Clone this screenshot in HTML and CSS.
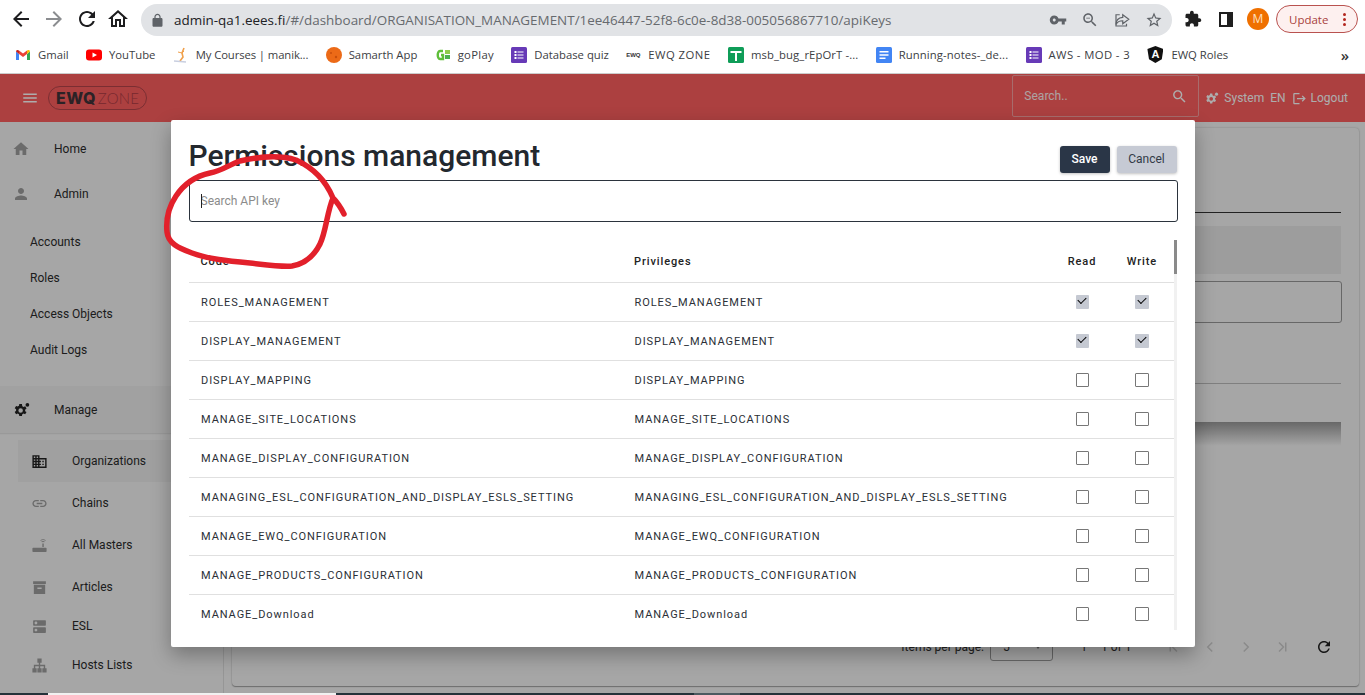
FILE: index.html
```html
<!DOCTYPE html>
<html lang="en">
<head>
  <meta charset="UTF-8" />
  <title>EWQ Zone</title>
  <link rel="stylesheet" href="styles.css">
</head>
<body>
  <div class="toolbar">
    <svg class="nav-icon" viewBox="0 0 24 24"><path d="M20 11H7.83l5.59-5.59L12 4l-8 8 8 8 1.41-1.41L7.83 13H20v-2z"/></svg>
    <svg class="nav-icon nav-off" viewBox="0 0 24 24"><path d="M4 11h12.17l-5.59-5.59L12 4l8 8-8 8-1.41-1.41L16.17 13H4v-2z"/></svg>
    <svg class="nav-icon" viewBox="0 0 24 24"><path d="M17.65 6.35C16.2 4.9 14.21 4 12 4c-4.42 0-7.99 3.58-7.99 8s3.57 8 7.99 8c3.73 0 6.84-2.55 7.73-6h-2.08c-.82 2.33-3.04 4-5.65 4-3.31 0-6-2.69-6-6s2.69-6 6-6c1.66 0 3.14.69 4.22 1.78L13 11h7V4l-2.35 2.35z"/></svg>
    <svg class="nav-icon nav-home" viewBox="0 0 24 24"><path d="M12 5.69l5 4.5V18h-2v-6H9v6H7v-7.81l5-4.5M12 3L2 12h3v8h6v-6h2v6h6v-8h3L12 3z"/></svg>
    <div class="omnibox">
      <svg class="lock" viewBox="0 0 24 24"><path d="M18 8h-1V6c0-2.76-2.24-5-5-5S7 3.24 7 6v2H6c-1.1 0-2 .9-2 2v10c0 1.1.9 2 2 2h12c1.1 0 2-.9 2-2V10c0-1.1-.9-2-2-2zm-9-2c0-1.66 1.34-3 3-3s3 1.34 3 3v2H9V6z"/></svg>
      <span class="url"><b>admin-qa1.eees.fi</b>/#/dashboard/ORGANISATION_MANAGEMENT/1ee46447-52f8-6c0e-8d38-005056867710/apiKeys</span>
      <svg class="omni-icon" viewBox="0 0 24 24"><path d="M12.65 10C11.83 7.67 9.61 6 7 6c-3.31 0-6 2.69-6 6s2.69 6 6 6c2.61 0 4.83-1.67 5.65-4H17v4h4v-4h2v-4H12.65zM7 14c-1.1 0-2-.9-2-2s.9-2 2-2 2 .9 2 2-.9 2-2 2z"/></svg>
      <svg class="omni-icon" viewBox="0 0 24 24"><path d="M15.5 14h-.79l-.28-.27C15.41 12.59 16 11.11 16 9.5 16 5.91 13.09 3 9.5 3S3 5.91 3 9.5 5.91 16 9.5 16c1.61 0 3.09-.59 4.23-1.57l.27.28v.79l5 4.99L20.49 19l-4.99-5zm-6 0C7.01 14 5 11.99 5 9.5S7.01 5 9.5 5 14 7.01 14 9.5 11.99 14 9.5 14zM7 9h5v1H7z"/></svg>
      <svg class="omni-icon" viewBox="0 0 24 24"><path fill="none" stroke="#5f6368" stroke-width="1.6" d="M13 5l8 6-8 6v-4c-4 0-7 1-9 5 0-6 3-9 9-9.500z"/><path fill="none" stroke="#5f6368" stroke-width="1.6" d="M9 5H4v15h14v-3"/></svg>
      <svg class="omni-icon" viewBox="0 0 24 24"><path d="M22 9.24l-7.19-.62L12 2 9.19 8.63 2 9.24l5.46 4.73L5.82 21 12 17.27 18.18 21l-1.63-7.03L22 9.24zM12 15.4l-3.76 2.27 1-4.280-3.32-2.88 4.38-.38L12 6.100l1.71 4.04 4.38.38-3.32 2.88 1 4.28L12 15.4z"/></svg>
    </div>
    <svg class="ext-icon" viewBox="0 0 24 24"><path d="M20.5 11H19V7c0-1.100-.9-2-2-2h-4V3.500C13 2.120 11.880 1 10.500 1S8 2.120 8 3.500V5H4c-1.100 0-1.990.9-1.990 2v3.800H3.500c1.490 0 2.700 1.210 2.700 2.700s-1.210 2.700-2.700 2.700H2V20c0 1.100.9 2 2 2h3.800v-1.500c0-1.490 1.210-2.700 2.700-2.700 1.490 0 2.700 1.210 2.700 2.700V22H17c1.100 0 2-.9 2-2v-4h1.500c1.380 0 2.500-1.120 2.500-2.500S21.880 11 20.500 11z"/></svg>
    <span class="side-panel"></span>
    <span class="avatar">M</span>
    <span class="update">Update<span class="update-dots"><i></i><i></i><i></i></span></span>
  </div>

  <div class="bookmarks">
    <span class="bm bm-gmail"><svg class="bm-icon" viewBox="0 0 16 16"><path fill="#4285f4" d="M1 13h3V7L1 4.500z"/><path fill="#34a853" d="M12 13h3V4.500L12 7z"/><path fill="#ea4335" d="M4 7V3.500L8 6.500l4-3V7L8 10z"/><path fill="#c5221f" d="M1 4.500C1 3 2.700 2.300 4 3.500V7z"/><path fill="#fbbc04" d="M15 4.500C15 3 13.300 2.300 12 3.500V7z"/></svg>Gmail</span>
    <span class="bm bm-yt"><svg class="bm-icon" viewBox="0 0 16 16"><rect x="0" y="2.500" width="16" height="11" rx="3" fill="#f00"/><path fill="#fff" d="M6.500 5.500v5l4.500-2.500z"/></svg>YouTube</span>
    <span class="bm bm-courses"><svg class="bm-icon" viewBox="0 0 16 16"><path fill="none" stroke="#f0a04b" stroke-width="1.600" d="M11 1L9 6l1 4-3 4"/><path fill="none" stroke="#f0a04b" d="M5 5l4 1 2-2"/><path fill="none" stroke="#c9cfe0" stroke-width="1.500" d="M1 14l12 1"/></svg>My Courses | manik...</span>
    <span class="bm bm-samarth"><svg class="bm-icon" viewBox="0 0 16 16"><circle cx="8" cy="8" r="8" fill="#ec6a17"/><circle cx="5" cy="6" r="1" fill="#c84f0c"/><circle cx="10" cy="10" r="1.200" fill="#c84f0c"/></svg>Samarth App</span>
    <span class="bm bm-goplay"><svg class="bm-icon" viewBox="0 0 16 16"><path fill="none" stroke="#5fbf3a" stroke-width="2.400" d="M8 4H5C2 4 2 12 5 12h3V8H6"/><rect x="10" y="3" width="5" height="4" fill="#8ecb4c"/><rect x="10" y="8" width="5" height="4" fill="#4caf50"/></svg>goPlay</span>
    <span class="bm bm-quiz"><svg class="bm-icon" viewBox="0 0 16 16"><rect width="16" height="16" rx="1.500" fill="#673ab7"/><path fill="#fff" d="M3.500 4h2v2h-2zM6.500 4.500h6v1h-6zM3.500 7h2v2h-2zM6.500 7.500h6v1h-6zM3.500 10h2v2h-2zM6.500 10.500h6v1h-6z"/></svg>Database quiz</span>
    <span class="bm bm-ewq"><span class="ewq-mini">EWQ</span>EWQ ZONE</span>
    <span class="bm bm-msb"><svg class="bm-icon" viewBox="0 0 16 16"><rect width="16" height="16" rx="1.500" fill="#0f9d58"/><path fill="#fff" d="M2.500 4h11v2h-4.500v8H7V6H2.500z"/></svg>msb_bug_rEpOrT -...</span>
    <span class="bm bm-notes"><svg class="bm-icon" viewBox="0 0 16 16"><rect width="16" height="16" rx="1.500" fill="#4285f4"/><path fill="#fff" d="M3.500 4h9v1.500h-9zM3.500 7.200h9v1.500h-9zM3.500 10.400h6v1.500h-6z"/></svg>Running-notes-_de...</span>
    <span class="bm bm-aws"><svg class="bm-icon" viewBox="0 0 16 16"><rect width="16" height="16" rx="1.500" fill="#673ab7"/><path fill="#fff" d="M3.500 4h2v2h-2zM6.500 4.500h6v1h-6zM3.500 7h2v2h-2zM6.500 7.500h6v1h-6zM3.500 10h2v2h-2zM6.500 10.500h6v1h-6z"/></svg>AWS - MOD - 3</span>
    <span class="bm bm-roles"><span class="shield">A</span>EWQ Roles</span>
    <span class="bm-more">»</span>
  </div>

  <div class="app">
    <header class="app-header">
      <svg class="menu-icon" viewBox="0 0 24 24"><path d="M3 18h18v-2H3v2zm0-5h18v-2H3v2zm0-7v2h18V6H3z"/></svg>
      <div class="logo"><b>EWQ</b><span>ZONE</span></div>
      <div class="header-search">
        <span>Search..</span>
        <svg viewBox="0 0 24 24"><path d="M15.500 14h-.79l-.28-.27C15.410 12.590 16 11.110 16 9.500 16 5.910 13.090 3 9.500 3S3 5.910 3 9.500 5.910 16 9.500 16c1.610 0 3.090-.59 4.230-1.570l.27.28v.79l5 4.990L20.490 19l-4.990-5zm-6 0C7.010 14 5 11.990 5 9.500S7.010 5 9.500 5 14 7.010 14 9.500 11.990 14 9.500 14z"/></svg>
      </div>
      <svg class="header-icon header-gear" viewBox="0 0 24 24"><path d="M17.500 13.500c.04-.3.060-.61.060-.94 0-.32-.02-.64-.07-.94l1.900-1.500-1.800-3.100-2.300.9c-.5-.38-1.030-.7-1.620-.94L13.300 4h-3.600l-.36 2.480c-.59.24-1.130.57-1.620.94l-2.300-.9-1.800 3.100 1.900 1.500c-.05.3-.09.63-.09.94s.02.64.07.94l-1.900 1.500 1.800 3.100 2.300-.9c.5.38 1.030.7 1.620.94l.38 2.460h3.600l.36-2.460c.59-.24 1.130-.56 1.620-.94l2.300.9 1.800-3.100zM11.500 15.500a3 3 0 1 1 0-6 3 3 0 0 1 0 6z"/><circle cx="20" cy="5" r="2.500"/></svg>
      <span class="header-link">System</span>
      <span class="header-link header-en">EN</span>
      <svg class="header-icon header-logout" viewBox="0 0 24 24"><path d="M17 7l-1.410 1.410L18.170 11H8v2h10.170l-2.580 2.580L17 17l5-5zM4 5h8V3H4c-1.100 0-2 .9-2 2v14c0 1.100.9 2 2 2h8v-2H4V5z"/></svg>
      <span class="header-link">Logout</span>
    </header>

    <div class="app-body">
      <nav class="sidebar">
        <div class="nav-top"><svg viewBox="0 0 24 24"><path d="M10 20v-6h4v6h5v-8h3L12 3 2 12h3v8z"/></svg>Home</div>
        <div class="nav-top"><svg viewBox="0 0 24 24"><path d="M12 12c2.210 0 4-1.790 4-4s-1.790-4-4-4-4 1.790-4 4 1.790 4 4 4zm0 2c-2.670 0-8 1.340-8 4v2h16v-2c0-2.660-5.330-4-8-4z"/></svg>Admin</div>
        <div class="nav-group nav-admin">
          <div class="nav-plain">Accounts</div>
          <div class="nav-plain">Roles</div>
          <div class="nav-plain">Access Objects</div>
          <div class="nav-plain">Audit Logs</div>
        </div>
        <div class="nav-top nav-open"><svg viewBox="0 0 24 24"><path d="M17.500 13.500c.04-.3.060-.61.060-.94 0-.32-.02-.64-.07-.94l1.900-1.500-1.800-3.100-2.300.9c-.5-.38-1.030-.7-1.620-.94L13.300 4h-3.600l-.36 2.480c-.59.24-1.130.57-1.620.94l-2.300-.9-1.800 3.100 1.900 1.500c-.05.3-.09.63-.09.94s.02.64.07.94l-1.900 1.500 1.800 3.100 2.300-.9c.5.38 1.030.7 1.620.94l.38 2.460h3.600l.36-2.460c.59-.24 1.130-.56 1.620-.94l2.300.9 1.800-3.100zM11.500 15.500a3 3 0 1 1 0-6 3 3 0 0 1 0 6z"/><circle cx="20.500" cy="5" r="2.500"/></svg>Manage</div>
        <div class="nav-group">
          <div class="nav-sub nav-active"><svg viewBox="0 0 24 24"><path d="M12 7V3H2v18h20V7H12zM6 19H4v-2h2v2zm0-4H4v-2h2v2zm0-4H4V9h2v2zm0-4H4V5h2v2zm4 12H8v-2h2v2zm0-4H8v-2h2v2zm0-4H8V9h2v2zm0-4H8V5h2v2zm10 12h-8v-2h2v-2h-2v-2h2v-2h-2V9h8v10zm-2-8h-2v2h2v-2zm0 4h-2v2h2v-2z"/></svg>Organizations</div>
          <div class="nav-sub"><svg viewBox="0 0 24 24"><path d="M3.900 12c0-1.710 1.390-3.100 3.100-3.100h4V7H7c-2.760 0-5 2.240-5 5s2.240 5 5 5h4v-1.900H7c-1.710 0-3.100-1.390-3.100-3.100zM8 13h8v-2H8v2zm9-6h-4v1.900h4c1.710 0 3.100 1.390 3.100 3.100s-1.390 3.100-3.100 3.100h-4V17h4c2.760 0 5-2.240 5-5s-2.240-5-5-5z"/></svg>Chains</div>
          <div class="nav-sub"><svg viewBox="0 0 24 24"><path d="M3 15h18a1 1 0 0 1 1 1v4a1 1 0 0 1-1 1H3a1 1 0 0 1-1-1v-4a1 1 0 0 1 1-1zm13-1V9h2v5zM14.500 6.500a4.500 4.500 0 0 1 5 0l-.8 1a3 3 0 0 0-3.400 0zM13 4.500a7 7 0 0 1 8 0l-.7.900a6 6 0 0 0-6.600 0z"/></svg>All Masters</div>
          <div class="nav-sub"><svg viewBox="0 0 24 24"><path d="M3 3h18v4H3zM4 8h16v13H4zm5 4v2h6v-2z" fill-rule="evenodd"/></svg>Articles</div>
          <div class="nav-sub nav-esl"><svg viewBox="0 0 24 24"><path d="M20 13H4c-.55 0-1 .45-1 1v6c0 .55.45 1 1 1h16c.55 0 1-.45 1-1v-6c0-.55-.45-1-1-1zM7 19c-1.100 0-2-.9-2-2s.9-2 2-2 2 .9 2 2-.9 2-2 2zM20 3H4c-.55 0-1 .45-1 1v6c0 .55.45 1 1 1h16c.55 0 1-.45 1-1V4c0-.55-.45-1-1-1zM7 9c-1.100 0-2-.9-2-2s.9-2 2-2 2 .9 2 2-.9 2-2 2z"/></svg>ESL</div>
          <div class="nav-sub nav-hosts"><svg viewBox="0 0 24 24"><path d="M9 2h6v6h-2v3h7v5h2v6h-6v-6h2v-3h-5v3h2v6H9v-6h2v-3H6v3h2v6H2v-6h2v-5h7V8H9z"/></svg>Hosts Lists</div>
        </div>
      </nav>

      <main class="main">
        <div class="card">
          <div class="card-head"></div>
          <div class="card-band"></div>
          <div class="card-box"></div>
          <div class="card-row"></div>
          <div class="card-shadow"></div>
          <div class="pager">
            <span>Items per page:</span>
            <span class="pager-select">5<i></i></span>
            <span class="pager-range">1 – 1 of 1</span>
            <svg class="pager-icon" viewBox="0 0 24 24"><path fill="none" stroke="currentColor" stroke-width="2" d="M16 6l-6 6 6 6M7 6v12"/></svg>
            <svg class="pager-icon" viewBox="0 0 24 24"><path fill="none" stroke="currentColor" stroke-width="2" d="M15 6l-6 6 6 6"/></svg>
            <svg class="pager-icon" viewBox="0 0 24 24"><path fill="none" stroke="currentColor" stroke-width="2" d="M9 6l6 6-6 6"/></svg>
            <svg class="pager-icon" viewBox="0 0 24 24"><path fill="none" stroke="currentColor" stroke-width="2" d="M8 6l6 6-6 6M17 6v12"/></svg>
            <svg class="pager-refresh" viewBox="0 0 24 24"><path d="M17.650 6.350C16.200 4.900 14.210 4 12 4c-4.420 0-7.990 3.580-7.990 8s3.570 8 7.990 8c3.730 0 6.840-2.550 7.730-6h-2.080c-.82 2.330-3.040 4-5.650 4-3.310 0-6-2.690-6-6s2.690-6 6-6c1.660 0 3.140.69 4.220 1.780L13 11h7V4l-2.350 2.350z"/></svg>
          </div>
        </div>
      </main>
    </div>

    <div class="backdrop">
      <div class="modal">
        <div class="modal-head">
          <h1>Permissions management</h1>
          <button class="btn btn-save">Save</button>
          <button class="btn btn-cancel">Cancel</button>
        </div>
        <div class="search-wrap">
          <input class="search-input" type="text" placeholder="Search API key" />
          <span class="caret"></span>
        </div>
        <div class="table-wrap">
          <table class="perm-table">
            <thead>
              <tr><th class="col-code">Code</th><th class="col-priv">Privileges</th><th class="col-read">Read</th><th class="col-write">Write</th></tr>
            </thead>
            <tbody>
              <tr><td>ROLES_MANAGEMENT</td><td>ROLES_MANAGEMENT</td><td class="col-read"><span class="check on"></span></td><td class="col-write"><span class="check on"></span></td></tr>
              <tr><td>DISPLAY_MANAGEMENT</td><td>DISPLAY_MANAGEMENT</td><td class="col-read"><span class="check on"></span></td><td class="col-write"><span class="check on"></span></td></tr>
              <tr><td>DISPLAY_MAPPING</td><td>DISPLAY_MAPPING</td><td class="col-read"><span class="check"></span></td><td class="col-write"><span class="check"></span></td></tr>
              <tr><td>MANAGE_SITE_LOCATIONS</td><td>MANAGE_SITE_LOCATIONS</td><td class="col-read"><span class="check"></span></td><td class="col-write"><span class="check"></span></td></tr>
              <tr><td>MANAGE_DISPLAY_CONFIGURATION</td><td>MANAGE_DISPLAY_CONFIGURATION</td><td class="col-read"><span class="check"></span></td><td class="col-write"><span class="check"></span></td></tr>
              <tr><td>MANAGING_ESL_CONFIGURATION_AND_DISPLAY_ESLS_SETTING</td><td>MANAGING_ESL_CONFIGURATION_AND_DISPLAY_ESLS_SETTING</td><td class="col-read"><span class="check"></span></td><td class="col-write"><span class="check"></span></td></tr>
              <tr><td>MANAGE_EWQ_CONFIGURATION</td><td>MANAGE_EWQ_CONFIGURATION</td><td class="col-read"><span class="check"></span></td><td class="col-write"><span class="check"></span></td></tr>
              <tr><td>MANAGE_PRODUCTS_CONFIGURATION</td><td>MANAGE_PRODUCTS_CONFIGURATION</td><td class="col-read"><span class="check"></span></td><td class="col-write"><span class="check"></span></td></tr>
              <tr><td>MANAGE_Download</td><td>MANAGE_Download</td><td class="col-read"><span class="check"></span></td><td class="col-write"><span class="check"></span></td></tr>
            </tbody>
          </table>
          <div class="scrollbar"><div class="scrollbar-thumb"></div></div>
        </div>
      </div>
    </div>
  </div>

  <div class="taskbar">
    <span class="task-a"></span><span class="task-b"></span><span class="task-c"></span><span class="task-d"></span><span class="task-e"></span>
  </div>

  <svg class="scribble" viewBox="0 0 1365 695"><path d="M344 214 C340 206 337 202 333 198 C328 186 318 170 296 160 C280 155 262 156 240 161 C228 165 222 171 210 173 C196 176 184 184 176 196 C168 208 166 222 167 232 C168 243 178 248 192 253 C208 259 228 261 250 263 C268 265 282 267 292 266 C304 264 314 256 320 244 C326 232 327 212 333 198"/></svg>
</body>
</html>
```

FILE: styles.css
```css
html, body {
  margin: 0;
  padding: 0;
  height: 100%;
}
body {
  position: relative;
  display: flex;
  flex-direction: column;
  height: 695px;
  overflow: hidden;
  background: #fff;
  font-family: 'Roboto', sans-serif;
}

/* browser chrome */
.toolbar {
  display: flex;
  align-items: center;
  height: 38px;
  padding-left: 9px;
  flex-shrink: 0;
}
.nav-icon {
  width: 24px;
  height: 24px;
  margin-right: 9px;
  fill: #1d1d1f;
}
.nav-off {
  fill: #8b8d90;
}
.nav-home {
  margin-left: -2px;
  margin-right: 0;
}
.omnibox {
  display: flex;
  align-items: center;
  width: 1031px;
  height: 32px;
  margin-top: 2px;
  margin-left: 11px;
  padding-left: 9px;
  box-sizing: border-box;
  border-radius: 16px;
  background: #e1e3e6;
}
.lock {
  width: 15px;
  height: 15px;
  fill: #5f6368;
}
.url {
  margin-left: 9px;
  flex: 1;
  font-family: 'Open Sans', sans-serif;
  font-size: 13.44px;
  color: #676a6e;
  white-space: nowrap;
}
.url b {
  font-weight: 400;
  color: #202124;
}
.omni-icon {
  width: 18px;
  height: 18px;
  margin-right: 14px;
  fill: #5f6368;
}
.omni-icon:last-child {
  margin-right: 9px;
}
.ext-icon {
  width: 18px;
  height: 18px;
  margin-left: 12px;
  fill: #1f1f1f;
}
.side-panel {
  width: 6px;
  height: 11px;
  margin-left: 17px;
  border: 2px solid #1f1f1f;
  border-right-width: 6px;
  background: #fff;
  box-sizing: content-box;
}
.avatar {
  width: 22px;
  height: 22px;
  margin-left: 14px;
  border-radius: 50%;
  background: #ef7000;
  color: #ffe0c2;
  font: 12px/22px 'Open Sans', sans-serif;
  text-align: center;
}
.update {
  display: flex;
  align-items: center;
  box-sizing: border-box;
  width: 82px;
  height: 28px;
  margin-left: 7px;
  padding-left: 12px;
  border: 1px solid #b9524f;
  border-radius: 14px;
  background: #fdf0ef;
  color: #a8403c;
  font: 11.5px 'Open Sans', sans-serif;
}
.update-dots {
  display: flex;
  flex-direction: column;
  gap: 2px;
  margin-left: 15px;
}
.update-dots i {
  width: 3px;
  height: 3px;
  border-radius: 50%;
  background: #b3261e;
}

.bookmarks {
  position: relative;
  display: flex;
  align-items: center;
  box-sizing: border-box;
  height: 36px;
  padding-left: 15px;
  padding-bottom: 2px;
  border-bottom: 1px solid #ccc;
  flex-shrink: 0;
  font-family: 'Open Sans', sans-serif;
  font-size: 11.3px;
  color: #3c4043;
  white-space: nowrap;
}
.bm {
  display: flex;
  align-items: center;
  margin-right: 17.3px;
}
.bm-icon {
  width: 16px;
  height: 16px;
  margin-right: 7px;
  flex-shrink: 0;
}
.bm-courses { letter-spacing: -.1px; }
.bm-goplay { letter-spacing: .3px; }
.bm-ewq { letter-spacing: .5px; }
.bm-msb { letter-spacing: .1px; }
.bm-notes { letter-spacing: .1px; }
.bm-aws { letter-spacing: .4px; }
.ewq-mini {
  width: 15px;
  margin-right: 7px;
  font-family: 'Liberation Sans', sans-serif;
  font-size: 6px;
  font-weight: 700;
  letter-spacing: 0;
  color: #333;
}
.shield {
  width: 16px;
  height: 17px;
  margin-right: 8px;
  background: #111;
  color: #fff;
  clip-path: polygon(50% 0, 100% 18%, 90% 78%, 50% 100%, 10% 78%, 0 18%);
  font: 700 11px/17px 'Liberation Sans', sans-serif;
  text-align: center;
}
.bm-more {
  margin-left: auto;
  margin-right: 16px;
  font-size: 15px;
  font-weight: 600;
  color: #333;
}

/* app behind the dialog */
.app {
  position: relative;
  display: flex;
  flex-direction: column;
  flex: 1;
  min-height: 0;
  background: #f5f5f5;
}
.app-header {
  display: flex;
  align-items: center;
  height: 48px;
  flex-shrink: 0;
  background: #fe5f5f;
  color: #fff;
}
.menu-icon {
  width: 18px;
  height: 18px;
  margin-left: 21px;
  fill: #fff;
}
.logo {
  display: flex;
  align-items: center;
  box-sizing: border-box;
  width: 99px;
  height: 24px;
  margin-left: 9px;
  padding-left: 7px;
  border: 1px solid #b5454b;
  border-radius: 12px;
  font-family: 'Inter', sans-serif;
  font-size: 16px;
  letter-spacing: .4px;
}
.logo b {
  color: #423338;
  font-weight: 800;
}
.logo span {
  margin-left: 2px;
  color: #b03c45;
  font-family: 'Lato', sans-serif;
  font-weight: 300;
  font-size: 15px;
  letter-spacing: .2px;
}
.header-search {
  display: flex;
  align-items: center;
  justify-content: space-between;
  box-sizing: border-box;
  width: 187px;
  height: 42px;
  margin-top: -4px;
  margin-left: auto;
  padding: 0 10px 0 11px;
  border: 1px solid #f8a0a0;
  border-radius: 2px;
  font-size: 12px;
}
.header-search span {
  opacity: .9;
  margin-top: -1px;
}
.header-search svg {
  width: 17px;
  height: 17px;
  fill: #fff;
}
.header-icon {
  width: 15px;
  height: 15px;
  fill: #fff;
}
.header-gear {
  margin-left: 5px;
  margin-right: 5px;
}
.header-logout {
  margin-left: 6px;
  margin-right: 4px;
}
.header-link {
  font-size: 12px;
  color: #fff;
}
.header-en {
  margin-left: 6px;
}
.app-header .header-link:last-child {
  margin-right: 17px;
}

.app-body {
  display: flex;
  flex: 1;
  min-height: 0;
}
.sidebar {
  width: 224px;
  box-sizing: border-box;
  flex-shrink: 0;
  padding-top: 4px;
  border-right: 1px solid #ddd;
  font-size: 12px;
  color: #2b2b2b;
}
.sidebar svg {
  fill: #9e9e9e;
  flex-shrink: 0;
}
.nav-top {
  display: flex;
  align-items: center;
  height: 45px;
  padding-left: 12px;
}
.nav-top svg {
  width: 18px;
  height: 18px;
  margin-right: 24px;
}
.nav-open {
  height: 47px;
  margin-top: 18px;
  background: #eee;
  box-shadow: 0 1px 1px #e2e2e2;
}
.sidebar .nav-open svg {
  fill: #222;
}
.nav-group {
  padding-top: 7px;
}
.nav-admin {
  padding-top: 8px;
}
.nav-plain {
  display: flex;
  align-items: center;
  height: 36px;
  padding-left: 30px;
}
.nav-sub {
  display: flex;
  align-items: center;
  height: 42px;
  margin-left: 18px;
  padding-left: 13px;
}
.nav-sub svg {
  width: 17px;
  height: 17px;
  margin-right: 24px;
}
.nav-esl {
  height: 36px;
}
.nav-hosts {
  height: 42px;
}
.nav-active {
  background: #ececec;
}
.sidebar .nav-active svg {
  fill: #222;
}

.main {
  flex: 1;
  min-width: 0;
  padding: 6px 6px 7px 8px;
  display: flex;
}
.card {
  display: flex;
  flex-direction: column;
  flex: 1;
  box-sizing: border-box;
  padding: 0 18px 0 0;
  border-radius: 4px;
  background: #f5f5f5;
  box-shadow: 0 0 2px #bbb, 0 1px 1px #999;
}
.card-head {
  height: 84px;
  border-bottom: 1px solid #333;
  flex-shrink: 0;
}
.card-band {
  height: 48px;
  margin-top: 13px;
  background: #e8e8e8;
  flex-shrink: 0;
}
.card-box {
  height: 40px;
  margin-top: 7px;
  margin-right: -1px;
  border: 1px solid #999;
  border-radius: 3px;
  flex-shrink: 0;
}
.card-row {
  height: 38px;
  margin-top: 60px;
  border-top: 1px solid #bbb;
  flex-shrink: 0;
}
.card-shadow {
  height: 24px;
  background: linear-gradient(#999, #f5f5f5);
  flex-shrink: 0;
}
.pager {
  display: flex;
  align-items: center;
  justify-content: flex-end;
  height: 48px;
  margin-top: auto;
  margin-bottom: 15px;
  font-size: 12px;
  color: #333;
}
.pager-select {
  display: flex;
  align-items: center;
  justify-content: space-between;
  box-sizing: border-box;
  width: 63px;
  height: 28px;
  margin-left: 6px;
  padding: 0 11px 0 12px;
  border: 1px solid #999;
  border-radius: 3px;
}
.pager-select i {
  border: 3px solid transparent;
  border-top: 4px solid #777;
  border-bottom: 0;
}
.pager-range {
  width: 96px;
  margin-left: 5px;
  margin-right: 11px;
  text-align: center;
}
.pager-icon {
  width: 18px;
  height: 18px;
  margin-right: 18px;
  color: #ccc;
}
.pager-refresh {
  width: 18px;
  height: 18px;
  margin-left: 6px;
  margin-right: 8px;
  fill: #222;
}

/* dialog */
.backdrop {
  position: absolute;
  inset: 0;
  display: flex;
  justify-content: center;
  align-items: flex-start;
  padding-top: 46px;
  box-sizing: border-box;
  background: rgba(0, 0, 0, .32);
}
.modal {
  box-sizing: border-box;
  width: 1024px;
  height: 527px;
  padding: 18px 17px 0 18px;
  overflow: hidden;
  border-radius: 2px;
  background: #fff;
  box-shadow: 0 8px 20px rgba(0, 0, 0, .3);
}
.modal-head {
  display: flex;
  align-items: flex-start;
  height: 42px;
}
.modal-head h1 {
  flex: 1;
  margin: 0;
  font-size: 30px;
  font-weight: 500;
  line-height: 36px;
  color: #23282e;
}
.btn {
  height: 27px;
  margin-top: 8px;
  padding: 0 0 2px;
  border: 0;
  border-radius: 3px;
  font: 500 12px 'Roboto', sans-serif;
  box-shadow: 0 1px 3px rgba(0, 0, 0, .25);
}
.btn-save {
  width: 50px;
  background: #2a3647;
  color: #fff;
}
.btn-cancel {
  width: 60px;
  margin-left: 7px;
  margin-right: 1px;
  background: #c6cad4;
  color: #333b47;
  font-weight: 400;
}
.search-wrap {
  position: relative;
}
.search-input {
  display: block;
  box-sizing: border-box;
  width: 100%;
  height: 42px;
  padding: 0 11px;
  border: 1px solid #2b333d;
  border-radius: 3px;
  outline: none;
  font: 12px 'Roboto', sans-serif;
}
.search-input::placeholder {
  color: #8b8b8b;
}
.caret {
  position: absolute;
  left: 12px;
  top: 14px;
  width: 1px;
  height: 14px;
  background: #222;
}
.table-wrap {
  display: flex;
  height: 390px;
  margin-top: 18px;
  overflow: hidden;
}
.perm-table {
  width: 985px;
  flex-shrink: 0;
  border-collapse: collapse;
  table-layout: fixed;
  align-self: flex-start;
}
.perm-table th {
  height: 42px;
  padding: 2px 0 0 12px;
  border-bottom: 1px solid #e0e0e0;
  box-sizing: border-box;
  text-align: left;
  font-size: 11px;
  font-weight: 500;
  letter-spacing: .9px;
  color: #222;
}
.perm-table td {
  height: 39px;
  padding: 2px 0 0 12.5px;
  border-bottom: 1px solid #e0e0e0;
  box-sizing: border-box;
  font-size: 11px;
  letter-spacing: .93px;
  color: #2b2f36;
  white-space: nowrap;
}
.perm-table .col-code {
  width: 433.5px;
}
.perm-table .col-read {
  width: 60px;
  padding: 2px 0 0 1px;
  text-align: center;
}
.perm-table .col-write {
  width: 62px;
  padding: 2px 1px 0 0;
  text-align: center;
}
.perm-table td.col-read {
  padding: 0 0 0 2px;
}
.perm-table td.col-write {
  padding: 0 1px 0 0;
}
.check {
  display: inline-block;
  box-sizing: border-box;
  position: relative;
  width: 13.5px;
  height: 14px;
  vertical-align: middle;
  border: 1px solid #777;
  border-radius: 1px;
}
.check.on {
  border: 0;
  background: #c5c9d2;
}
.check.on::after {
  content: "";
  position: absolute;
  left: 2.5px;
  top: 2.5px;
  width: 7px;
  height: 4px;
  border-left: 1.5px solid #000;
  border-bottom: 1.5px solid #000;
  transform: rotate(-45deg);
}
.scrollbar {
  width: 3px;
  flex-shrink: 0;
  background: #f1f1f1;
}
.scrollbar-thumb {
  height: 34px;
  background: #8a8a8a;
}

.taskbar {
  display: flex;
  height: 2px;
  flex-shrink: 0;
  background: #25323a;
}
.task-a { width: 48px; }
.task-b { width: 288px; background: #f1f1f1; }
.task-c { width: 358px; }
.task-d { width: 46px; background: #4d5a60; }
.task-e { flex: 1; }

.scribble {
  position: absolute;
  left: 0;
  top: 0;
  width: 1365px;
  height: 695px;
  pointer-events: none;
}
.scribble path {
  fill: none;
  stroke: #e2202b;
  stroke-width: 5.5;
  stroke-linecap: round;
  stroke-linejoin: round;
}
```
